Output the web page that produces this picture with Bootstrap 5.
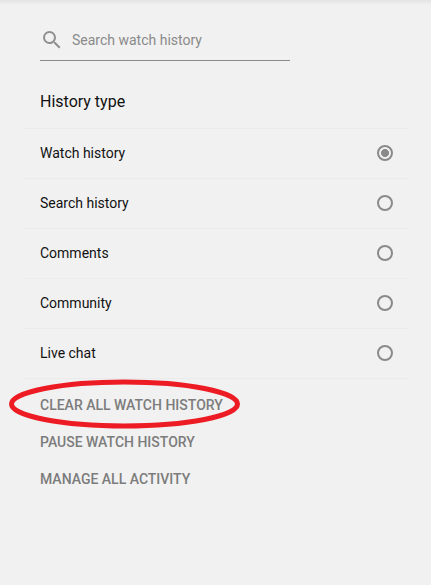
<!DOCTYPE html>
<html lang="en">
<head>
<meta charset="utf-8">
<title>History</title>
<link href="https://cdn.jsdelivr.net/npm/bootstrap@5.3.0/dist/css/bootstrap.min.css" rel="stylesheet">
<style>
html, body { height: 100%; }
body { background: #f1f1f1; font-family: Roboto, "Liberation Sans", sans-serif; font-size: 14px; color: #111; overflow: hidden; }
.hist-panel { height: 585px; background: #f1f1f1; box-shadow: inset 0 5px 4px -3px rgba(0,0,0,.07); padding: 20px 23px 0 24px; }
.hist-search { width: 250px; height: 41px; margin-left: 16px; border-bottom: 1px solid #8a8a8a; }
.hist-search svg { width: 24px; height: 24px; fill: #909090; flex: none; }
.hist-search input { border: 0; background: transparent; outline: 0; padding: 0; margin-left: 8px; width: 200px; font-size: 14px; color: #111; height: 20px; }
.hist-search input::placeholder { color: #8a8a8a; opacity: 1; }
.hist-title { font-size: 16px; font-weight: 400; line-height: 20px; margin: 31px 0 16px 16px; color: #111; }
.hist-list { border-top: 1px solid #ebebeb; }
.hist-row { height: 50px; padding: 0 15px 2px 16px; border-bottom: 1px solid #ebebeb; line-height: 20px; background: transparent; margin: 0; cursor: pointer; }
.hist-row input { appearance: none; width: 16px; height: 16px; margin: 0; border: 2px solid #8a8a8a; border-radius: 50%; background: transparent; }
.hist-row input:checked { background: radial-gradient(circle closest-side, #8a8a8a 0 3.7px, transparent 4.3px); }
.hist-actions { position: relative; padding: 8px 0 0 16px; }
.hist-link { display: block; height: 37px; line-height: 37px; font-weight: 500; font-size: 14px; color: #7c7c7c; text-decoration: none; text-transform: uppercase; }
.hist-oval { position: absolute; left: -15px; top: 0; width: 232px; height: 52px; fill: none; stroke: #ed1c24; stroke-width: 5; }
</style>
</head>
<body>
<div class="hist-panel">
  <div class="hist-search d-flex align-items-center">
    <svg viewBox="0 0 24 24" aria-hidden="true"><path d="M15.5 14h-.79l-.28-.27A6.47 6.47 0 0 0 16 9.5 6.5 6.5 0 1 0 9.5 16c1.61 0 3.09-.59 4.23-1.57l.27.28v.79l5 4.99L20.49 19l-4.99-5zm-6 0C7.01 14 5 11.99 5 9.5S7.01 5 9.5 5 14 7.01 14 9.5 11.99 14 9.5 14z"/></svg>
    <input type="text" placeholder="Search watch history" aria-label="Search watch history">
  </div>
  <h2 class="hist-title">History type</h2>
  <div class="hist-list">
    <label class="hist-row d-flex align-items-center justify-content-between">Watch history<input type="radio" name="htype" checked></label>
    <label class="hist-row d-flex align-items-center justify-content-between">Search history<input type="radio" name="htype"></label>
    <label class="hist-row d-flex align-items-center justify-content-between">Comments<input type="radio" name="htype"></label>
    <label class="hist-row d-flex align-items-center justify-content-between">Community<input type="radio" name="htype"></label>
    <label class="hist-row d-flex align-items-center justify-content-between">Live chat<input type="radio" name="htype"></label>
  </div>
  <div class="hist-actions">
    <a class="hist-link" href="#">Clear all watch history</a>
    <a class="hist-link" href="#">Pause watch history</a>
    <a class="hist-link" href="#">Manage all activity</a>
    <svg class="hist-oval" viewBox="0 0 232 52" aria-hidden="true"><ellipse cx="115.5" cy="25" rx="113" ry="22"/></svg>
  </div>
</div>
<script src="https://cdn.jsdelivr.net/npm/bootstrap@5.3.0/dist/js/bootstrap.bundle.min.js"></script>
</body>
</html>
